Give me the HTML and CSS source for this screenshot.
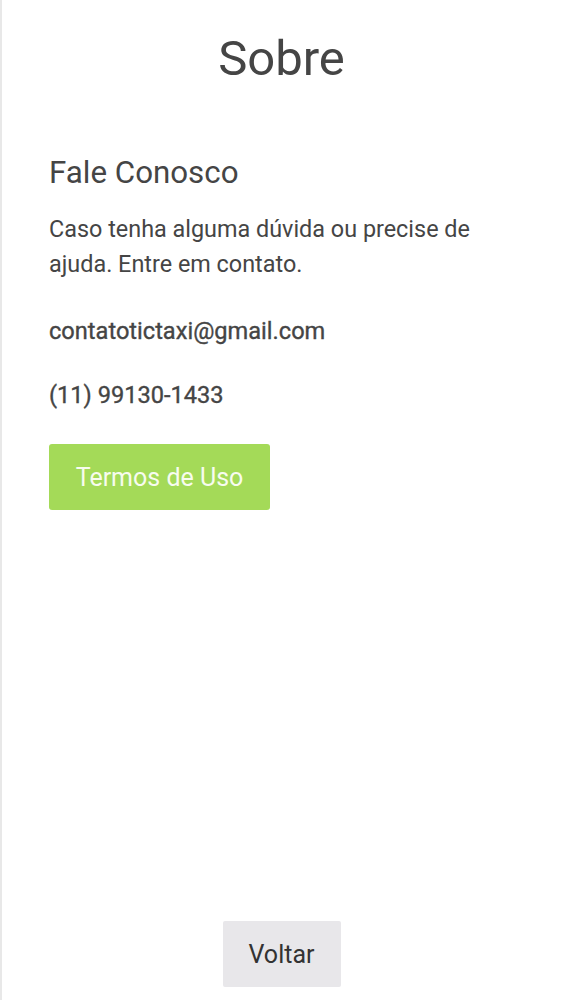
FILE: index.html
```html
<!DOCTYPE html>
<html lang="pt">
<head>
    <meta charset="UTF-8">
    <meta name="viewport" content="width=device-width, initial-scale=1.0">
    <title>Sobre</title>
    <link rel="stylesheet" href="styles.css">
</head>
<body>
    <div class="tela">
        <h1 class="titulo">Sobre</h1>

        <div class="conteudo">
            <h2 class="subtitulo">Fale Conosco</h2>
            <p class="descricao">Caso tenha alguma dúvida ou precise de ajuda. Entre em contato.</p>
            <p class="contato">contatotictaxi@gmail.com</p>
            <p class="contato">(11) 99130-1433</p>
            <button class="btn-termos">Termos de Uso</button>
        </div>

        <div class="rodape">
            <button class="btn-voltar">Voltar</button>
        </div>
    </div>
</body>
</html>
```

FILE: styles.css
```css
* {
    margin: 0;
    padding: 0;
    box-sizing: border-box;
}

body {
    font-family: Roboto, 'Noto Sans', sans-serif;
    background: #fff;
    color: #454545;
}

.tela {
    min-height: 1000px;
    border-left: 2px solid #e8e8e8;
    display: flex;
    flex-direction: column;
}

.titulo {
    font-size: 49px;
    font-weight: 400;
    text-align: center;
    margin-top: 30px;
    margin-right: 2px;
    line-height: 1.2;
}

.conteudo {
    padding: 0 47px;
    margin-top: 65px;
    flex: 1;
}

.subtitulo {
    font-size: 31.3px;
    font-weight: 400;
    line-height: 1.2;
    margin-bottom: 21px;
}

.descricao {
    font-size: 23.4px;
    line-height: 35px;
    max-width: 460px;
    margin-bottom: 34px;
}

.contato {
    font-size: 23.6px;
    font-weight: 400;
    -webkit-text-stroke: 0.35px currentColor;
    line-height: 30px;
    margin-bottom: 34px;
}

.btn-termos {
    background: #a4da58;
    color: #f7fcef;
    border: none;
    border-radius: 3px;
    font-family: inherit;
    font-size: 25px;
    width: 221px;
    height: 66px;
}

.rodape {
    display: flex;
    justify-content: center;
    margin-right: 2px;
    padding-bottom: 13px;
}

.btn-voltar {
    background: #e8e7ea;
    color: #333;
    border: none;
    border-radius: 2px;
    font-family: inherit;
    font-size: 25px;
    width: 118px;
    height: 66px;
}
```
